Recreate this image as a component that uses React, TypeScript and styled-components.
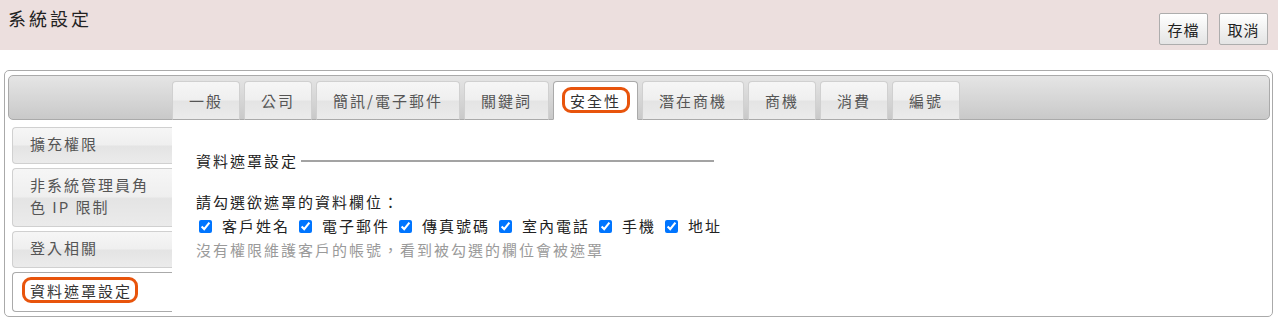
import React from "react";
import styled, { createGlobalStyle, css } from "styled-components";

const GlobalStyle = createGlobalStyle`
  html, body {
    margin: 0;
    padding: 0;
    background: #fff;
  }
  body {
    font-family: "Noto Sans CJK TC", "Noto Sans", sans-serif;
    color: #333;
  }
`;

/* 상단 헤더 */
const Header = styled.header`
  height: 50px;
  background-color: #ecdfde;
  display: flex;
  justify-content: space-between;
  align-items: flex-start;
  padding: 0 10px 0 8px;
  box-sizing: border-box;
`;

const Title = styled.h1`
  margin: 0;
  padding-top: 6px;
  font-size: 18px;
  line-height: 24px;
  font-weight: 400;
  letter-spacing: 3px;
  color: #222;
`;

const ButtonBox = styled.div`
  display: flex;
  gap: 11px;
  margin-top: 13px;
`;

const HeadButton = styled.button`
  width: 49px;
  height: 32px;
  padding: 0;
  border: 1px solid #adadad;
  border-radius: 2px;
  background: linear-gradient(#ffffff, #e4e4e4);
  font-family: inherit;
  font-size: 15px;
  letter-spacing: 1px;
  color: #222;
  cursor: pointer;
`;

/* 패널 */
const Panel = styled.section`
  margin: 20px 5px 0 4px;
  padding: 4px 2px 4px 3px;
  border: 1px solid #aaa;
  border-radius: 5px;
`;

const TabBar = styled.nav`
  height: 45px;
  box-sizing: border-box;
  border: 1px solid #aaa;
  border-radius: 5px;
  background: linear-gradient(#e5e5e5, #c9c9c9);
  display: flex;
  align-items: flex-end;
  gap: 4px;
  padding: 4px 0 0 163px;
`;

const gloss = css`
  background: linear-gradient(
    #f6f6f6 0%,
    #efefef 48%,
    #e4e4e4 52%,
    #ebebeb 100%
  );
`;

const Tab = styled.div<{ $active?: boolean }>`
  height: 39px;
  box-sizing: border-box;
  margin-bottom: -1px;
  padding: 0 16px 1px;
  border: 1px solid #d0d0d0;
  border-bottom-color: #aaa;
  border-radius: 4px 4px 0 0;
  display: flex;
  align-items: center;
  font-size: 15px;
  letter-spacing: 2px;
  color: #555;
  ${gloss};

  ${(p) =>
    p.$active &&
    css`
      background: #fff;
      border-color: #aaa;
      border-bottom-color: #fff;
      color: #333;
    `}
`;

/* 주석용 주황 테두리 (텍스트 위에 겹침) */
const Marked = styled.span<{ $l: number; $r: number }>`
  position: relative;
  &::after {
    content: "";
    position: absolute;
    left: -${(p) => p.$l}px;
    right: -${(p) => p.$r}px;
    top: -3px;
    bottom: -2px;
    border: 3px solid #e8540c;
    border-radius: 9px;
  }
`;

const Body = styled.div`
  display: flex;
`;

const SideNav = styled.div`
  width: 164px;
  flex-shrink: 0;
  padding: 7px 0 0 4px;
  box-sizing: border-box;
  display: flex;
  flex-direction: column;
  gap: 4px;
`;

const SideItem = styled.div<{ $active?: boolean }>`
  padding: 5px 14px 8px 17px;
  border: 1px solid #d0d0d0;
  border-right: 0;
  border-radius: 4px 0 0 4px;
  font-size: 15px;
  line-height: 22px;
  letter-spacing: 2px;
  color: #555;
  ${gloss};

  ${(p) =>
    p.$active &&
    css`
      background: #fff;
      border-color: #aaa;
      padding: 7px 14px 9px 17px;
      color: #333;
    `}
`;

const Content = styled.div`
  flex: 1;
  padding: 30px 20px 0 24px;
  font-size: 15px;
  letter-spacing: 2px;
  line-height: 22px;
`;

const Legend = styled.div`
  width: 518px;
  display: flex;
  align-items: center;
  gap: 3px;
  color: #222;
`;

const Rule = styled.div`
  flex: 1;
  height: 2px;
  background: #a3a3a3;
`;

const Question = styled.p`
  margin: 19px 0 0;
  color: #222;
`;

const CheckRow = styled.div`
  display: flex;
  align-items: center;
  height: 26px;
`;

const CheckLabel = styled.label`
  display: flex;
  align-items: center;
  margin-right: 6px;
  color: #222;
`;

const Check = styled.input`
  width: 13px;
  height: 13px;
  margin: 0 10px 0 3px;
  accent-color: #0075ff;
`;

const Hint = styled.p`
  margin: 0;
  color: #9a9a9a;
`;

const tabs = ["一般", "公司", "簡訊/電子郵件", "關鍵詞", "安全性", "潛在商機", "商機", "消費", "編號"];
const sideItems = ["擴充權限", "非系統管理員角色 IP 限制", "登入相關", "資料遮罩設定"];
const fields = ["客戶姓名", "電子郵件", "傳真號碼", "室內電話", "手機", "地址"];

export default function App() {
  return (
    <>
      <GlobalStyle />
      <Header>
        <Title>系統設定</Title>
        <ButtonBox>
          <HeadButton>存檔</HeadButton>
          <HeadButton>取消</HeadButton>
        </ButtonBox>
      </Header>

      <Panel>
        <TabBar>
          {tabs.map((t) => (
            <Tab key={t} $active={t === "安全性"}>
              {t === "安全性" ? (
                <Marked $l={8} $r={9}>
                  {t}
                </Marked>
              ) : (
                t
              )}
            </Tab>
          ))}
        </TabBar>

        <Body>
          <SideNav>
            {sideItems.map((s) => (
              <SideItem key={s} $active={s === "資料遮罩設定"}>
                {s === "資料遮罩設定" ? (
                  <Marked $l={8} $r={6}>
                    {s}
                  </Marked>
                ) : (
                  s
                )}
              </SideItem>
            ))}
          </SideNav>

          <Content>
            <Legend>
              <span>資料遮罩設定</span>
              <Rule />
            </Legend>
            <Question>請勾選欲遮罩的資料欄位：</Question>
            <CheckRow>
              {fields.map((f) => (
                <CheckLabel key={f}>
                  <Check type="checkbox" defaultChecked />
                  {f}
                </CheckLabel>
              ))}
            </CheckRow>
            <Hint>沒有權限維護客戶的帳號，看到被勾選的欄位會被遮罩</Hint>
          </Content>
        </Body>
      </Panel>
    </>
  );
}
